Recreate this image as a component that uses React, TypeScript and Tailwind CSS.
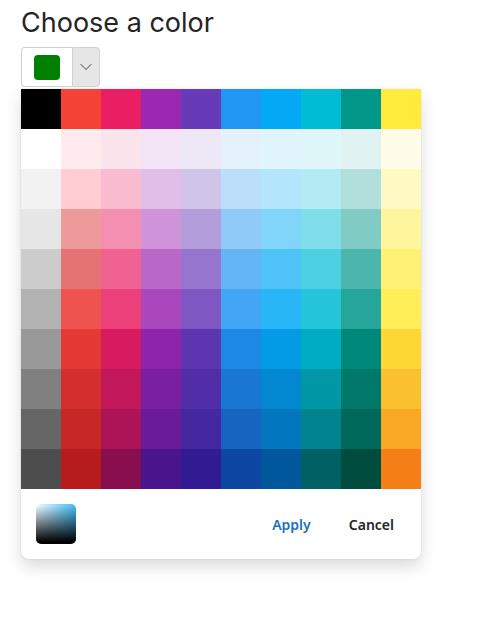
import { ChevronDown } from 'lucide-react'

const rows: string[][] = [
  ['#000000', '#F44336', '#E91E63', '#9C27B0', '#673AB7', '#2196F3', '#03A9F4', '#00BCD4', '#009688', '#FFEB3B'],
  ['#FFFFFF', '#FFEBEE', '#FCE4EC', '#F3E5F5', '#EDE7F6', '#E3F2FD', '#E1F5FE', '#E0F7FA', '#E0F2F1', '#FFFDE7'],
  ['#F2F2F2', '#FFCDD2', '#F8BBD0', '#E1BEE7', '#D1C4E9', '#BBDEFB', '#B3E5FC', '#B2EBF2', '#B2DFDB', '#FFF9C4'],
  ['#E6E6E6', '#EF9A9A', '#F48FB1', '#CE93D8', '#B39DDB', '#90CAF9', '#81D4FA', '#80DEEA', '#80CBC4', '#FFF59D'],
  ['#CCCCCC', '#E57373', '#F06292', '#BA68C8', '#9575CD', '#64B5F6', '#4FC3F7', '#4DD0E1', '#4DB6AC', '#FFF176'],
  ['#B3B3B3', '#EF5350', '#EC407A', '#AB47BC', '#7E57C2', '#42A5F5', '#29B6F6', '#26C6DA', '#26A69A', '#FFEE58'],
  ['#999999', '#E53935', '#D81B60', '#8E24AA', '#5E35B1', '#1E88E5', '#039BE5', '#00ACC1', '#00897B', '#FDD835'],
  ['#808080', '#D32F2F', '#C2185B', '#7B1FA2', '#512DA8', '#1976D2', '#0288D1', '#0097A7', '#00796B', '#FBC02D'],
  ['#666666', '#C62828', '#AD1457', '#6A1B9A', '#4527A0', '#1565C0', '#0277BD', '#00838F', '#00695C', '#F9A825'],
  ['#4D4D4D', '#B71C1C', '#880E4F', '#4A148C', '#311B92', '#0D47A1', '#01579B', '#006064', '#004D40', '#F57F17'],
]

export default function App() {
  return (
    <div className="min-h-[622px] bg-white pl-[21px] pt-[5px] font-['Inter',sans-serif] text-[#242424]">
      <h1 className="text-[27px] leading-[36px]">Choose a color</h1>

      {/* Picker button */}
      <div className="mt-[6px] flex h-[40px] w-[79px]">
        <button className="flex w-[51px] items-center justify-center rounded-l-[4px] border border-r-0 border-[#d1d1d1] bg-white">
          <span className="block h-[25px] w-[26px] rounded-[4px] bg-[#008000]" />
        </button>
        <button className="flex w-[28px] items-center justify-center rounded-r-[4px] border border-[#d1d1d1] bg-[#e6e6e6]">
          <ChevronDown size={20} strokeWidth={1.1} className="text-[#333]" />
        </button>
      </div>

      {/* Dropdown panel */}
      <div className="mt-[2px] w-[400px] overflow-hidden rounded-b-[8px] bg-white shadow-[0_8px_16px_rgba(0,0,0,0.14),0_0_2px_rgba(0,0,0,0.12)]">
        <div className="grid grid-cols-10">
          {rows.map((row, r) =>
            row.map((c, i) => (
              <div key={`${r}-${i}`} className="h-[40px] w-[40px]" style={{ backgroundColor: c }} />
            ))
          )}
        </div>
        <div className="flex h-[70px] items-center pl-[15px] pr-[27px]">
          <div className="h-[40px] w-[40px] rounded-[5px] bg-[linear-gradient(to_bottom,rgba(0,0,0,0)_5%,#000_95%),linear-gradient(to_right,#eef9ff,#3fb8ef)]" />
          <div className="flex-1" />
          <button className="font-['Noto_Sans',sans-serif] text-[14px] font-semibold text-[#1a6fc0]">Apply</button>
          <button className="ml-[38px] font-['Noto_Sans',sans-serif] text-[14px] font-semibold text-[#242424]">Cancel</button>
        </div>
      </div>
    </div>
  )
}
